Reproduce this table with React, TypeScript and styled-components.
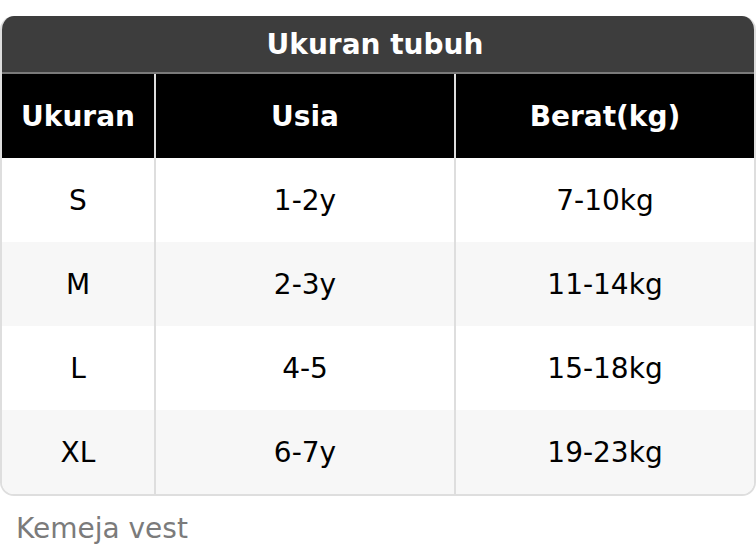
import React from "react";
import styled, { createGlobalStyle } from "styled-components";

const GlobalStyle = createGlobalStyle`
  html, body {
    margin: 0;
    padding: 0;
    background: #ffffff;
  }
  body {
    font-family: "DejaVu Sans", "Liberation Sans", sans-serif;
  }
`;

const Page = styled.div`
  width: 756px;
  padding-top: 16px;
`;

const Table = styled.div`
  border: 2px solid #dedede;
  border-top: none;
  border-radius: 14px;
  overflow: hidden;
`;

const Caption = styled.div`
  height: 56px;
  background: #3d3d3d;
  color: #ffffff;
  font-weight: bold;
  font-size: 28px;
  display: flex;
  align-items: center;
  justify-content: center;
  padding-right: 6px;
  border-bottom: 2px solid #7a7a7a;
  margin: 0 -2px;
`;

const Row = styled.div<{ $striped?: boolean; $head?: boolean }>`
  display: grid;
  grid-template-columns: 152px 300px 300px;
  height: 84px;
  background: ${({ $head, $striped }) =>
    $head ? "#000000" : $striped ? "#f7f7f7" : "#ffffff"};
  color: ${({ $head }) => ($head ? "#ffffff" : "#000000")};
  font-weight: ${({ $head }) => ($head ? "bold" : "normal")};
  font-size: 28px;
`;

const Cell = styled.div<{ $head?: boolean }>`
  display: flex;
  align-items: center;
  justify-content: center;
  & + & {
    border-left: 2px solid ${({ $head }) => ($head ? "#7a7a7a" : "#dedede")};
  }
`;

const Note = styled.div`
  padding: 16px 16px;
  font-size: 28px;
  color: #7b7b7b;
`;

const rows = [
  ["S", "1-2y", "7-10kg"],
  ["M", "2-3y", "11-14kg"],
  ["L", "4-5", "15-18kg"],
  ["XL", "6-7y", "19-23kg"],
];

export default function App() {
  return (
    <Page>
      <GlobalStyle />
      <Table>
        <Caption>Ukuran tubuh</Caption>
        <Row $head>
          <Cell $head>Ukuran</Cell>
          <Cell $head>Usia</Cell>
          <Cell $head>Berat(kg)</Cell>
        </Row>
        {rows.map((r, i) => (
          <Row key={i} $striped={i % 2 === 1}>
            {r.map((c, j) => (
              <Cell key={j}>{c}</Cell>
            ))}
          </Row>
        ))}
      </Table>
      <Note>Kemeja vest</Note>
    </Page>
  );
}
